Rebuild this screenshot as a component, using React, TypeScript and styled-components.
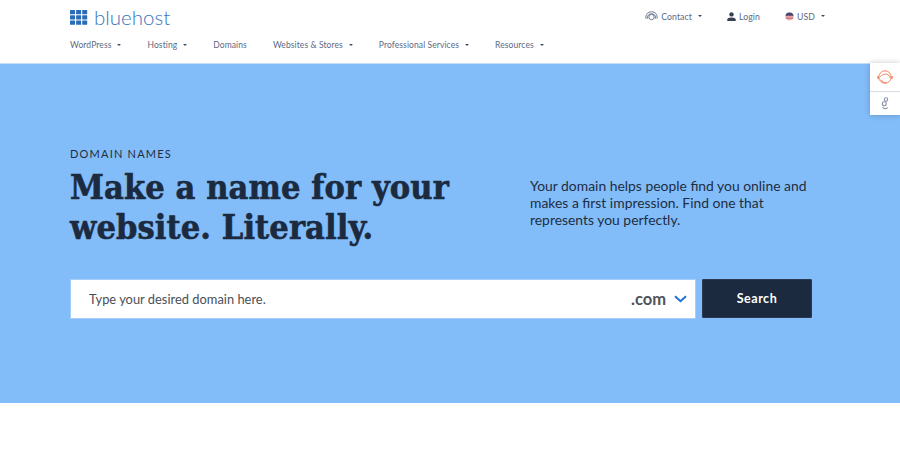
import React from "react";
import styled, { createGlobalStyle } from "styled-components";

const Global = createGlobalStyle`
  html, body { margin: 0; padding: 0; background: #fff; }
  body { font-family: "Lato", "Liberation Sans", sans-serif; overflow: hidden; }
`;

const Page = styled.div`
  width: 900px;
  height: 476px;
  position: relative;
  overflow: hidden;
  background: #fff;
`;

const Header = styled.header`
  height: 63px;
  box-sizing: border-box;
  padding: 0 75px 0 70px;
  display: flex;
  flex-direction: column;
`;

const TopRow = styled.div`
  height: 36px;
  display: flex;
  justify-content: space-between;
  align-items: flex-start;
`;

const Logo = styled.a`
  display: flex;
  align-items: center;
  gap: 6px;
  padding-top: 8px;
  color: #3a75bb;
  font-size: 20.5px;
  font-weight: 300;
  line-height: 20px;
`;

const LogoWord = styled.span`
  margin-top: -1px;
`;

const Utility = styled.div`
  display: flex;
  align-items: center;
  gap: 25px;
  height: 32px;
`;

const UtilityItem = styled.span`
  display: inline-flex;
  align-items: center;
  gap: 3px;
  color: #5c6a84;
  font-size: 8.7px;
  letter-spacing: 0.1px;
`;

const Caret = styled.i<{ $near?: boolean }>`
  display: inline-block;
  width: 0;
  height: 0;
  margin-left: ${(p) => (p.$near ? "3px" : "6px")};
  border-left: 2px solid transparent;
  border-right: 2px solid transparent;
  border-top: 2px solid #3d4a66;
`;

const Nav = styled.nav`
  display: flex;
  align-items: center;
  gap: 26px;
  height: 16px;
  padding-top: 1px;
`;

const NavItem = styled.a`
  display: inline-flex;
  align-items: center;
  color: #5c6a84;
  font-size: 8.5px;
  letter-spacing: 0.1px;
  white-space: nowrap;
`;

const Hero = styled.section`
  height: 340px;
  box-sizing: border-box;
  background: #82bdf9;
  border-top: 1px solid #c3def9;
  padding: 84px 88px 0 70px;
  display: flex;
  flex-direction: column;
`;

const HeroTop = styled.div`
  display: flex;
  justify-content: space-between;
  align-items: flex-start;
`;

const Eyebrow = styled.div`
  color: #1f2d42;
  font-size: 11px;
  line-height: 12px;
  letter-spacing: 1.2px;
`;

const Title = styled.h1`
  margin: 7px 0 0;
  color: #1c2a3f;
  font-family: "DejaVu Serif Condensed", "DejaVu Serif", "Liberation Serif", serif;
  font-stretch: condensed;
  font-weight: 700;
  font-size: 34px;
  line-height: 40px;
  letter-spacing: 0.1px;
  -webkit-text-stroke: 0.6px #1c2a3f;
`;

const Lead = styled.p`
  margin: 29px 0 0;
  width: 282px;
  color: #1f2d42;
  font-size: 13.9px;
  line-height: 17px;
`;

const SearchRow = styled.form`
  margin-top: 32px;
  display: flex;
  gap: 6px;
`;

const SearchBox = styled.div`
  width: 626px;
  height: 40px;
  box-sizing: border-box;
  background: #fff;
  border: 1px solid #a5cff9;
  display: flex;
  align-items: center;
  padding: 0 8px 0 18px;
`;

const Placeholder = styled.span`
  flex: 1;
  color: #4a4f57;
  font-size: 12.9px;
`;

const Tld = styled.span`
  color: #4f5359;
  font-size: 16.5px;
  font-weight: 700;
  margin-right: 8px;
`;

const SearchButton = styled.button`
  width: 110px;
  height: 39px;
  padding: 0 0 1px;
  background: #1c2a3f;
  border: 1px solid #2c3a50;
  border-radius: 1px;
  color: #fff;
  font-family: "Lato", sans-serif;
  font-weight: 700;
  font-size: 12.5px;
  letter-spacing: 0.5px;
`;

const SideDock = styled.aside`
  position: absolute;
  right: 0;
  top: 63px;
  width: 30px;
  height: 52px;
  background: #fff;
  box-shadow: 0 0 6px rgba(0, 0, 0, 0.22);
  display: flex;
  flex-direction: column;
`;

const DockCell = styled.div<{ $divided?: boolean }>`
  flex: ${(p) => (p.$divided ? "23" : "29")};
  display: flex;
  align-items: center;
  justify-content: center;
  border-top: ${(p) => (p.$divided ? "1px solid #d9dde3" : "none")};
`;

const dash = [0, 1, 2];

const LogoMark = () => (
  <svg width="18" height="16" viewBox="0 0 18 16" fill="#2b6cb8">
    {dash.map((r) =>
      dash.map((c) => (
        <rect key={`${r}${c}`} x={c * 6.1} y={r * 5.2} width="5" height="4.3" rx="0.5" />
      ))
    )}
  </svg>
);

const Headset = () => (
  <svg width="13" height="10" viewBox="0 0 13 10" fill="none" stroke="#5c6a84" strokeWidth="0.9">
    <path d="M.8 7.5C.6 3 3 .8 6.5 .8S12.400 3 12.200 7.500" />
    <path d="M2.300 7.800C2 4.500 3.800 2.800 6.500 2.800S11 4.500 10.700 7.800" />
    <circle cx="6.500" cy="6" r="2.700" />
  </svg>
);

const Person = () => (
  <svg width="9" height="9" viewBox="0 0 9 9" fill="#36404f">
    <circle cx="4.5" cy="2.4" r="2.2" />
    <path d="M0.3 9V7.6C0.3 6.2 2 5.5 4.5 5.5S8.7 6.2 8.7 7.6V9z" />
  </svg>
);

const Flag = () => (
  <svg width="9" height="9" viewBox="0 0 9 9">
    <defs>
      <clipPath id="flagclip">
        <circle cx="4.5" cy="4.5" r="4" />
      </clipPath>
    </defs>
    <g clipPath="url(#flagclip)">
      <rect width="9" height="9" fill="#e9b9bd" />
      <rect y="3" width="9" height="1.3" fill="#d56a75" />
      <rect y="5.6" width="9" height="1.3" fill="#d56a75" />
      <rect width="9" height="3.6" fill="#3f4a74" />
    </g>
  </svg>
);

const AgentIcon = () => (
  <svg width="16" height="16" viewBox="0 0 16 16" fill="none" stroke="#f0835c" strokeWidth="1">
    <circle cx="8" cy="8" r="6.200" />
    <path d="M2.600 8.500C4.500 5.500 9 4 11.500 6C12.600 7 13 8 13.300 9" />
    <path d="M4 10.500C5 12.800 7 14 9.500 13.800" />
    <path d="M1 7v3M15 7v3" strokeWidth="1.400" />
  </svg>
);

const BulbIcon = () => (
  <svg width="8" height="13" viewBox="0 0 8 13" fill="none" stroke="#8a95a6" strokeWidth="1.100">
    <circle cx="5" cy="2.500" r="1.700" />
    <circle cx="3.300" cy="6.800" r="2" />
    <path d="M1.500 10.300c1 1.700 4 1.700 5.500 0.400" />
  </svg>
);

const Chevron = () => (
  <svg width="13" height="8" viewBox="0 0 13 8" fill="none" stroke="#2070d8" strokeWidth="2">
    <path d="M1 1.200l5.500 5 5.500-5" />
  </svg>
);

export default function App() {
  return (
    <Page>
      <Global />
      <Header>
        <TopRow>
          <Logo>
            <LogoMark />
            <LogoWord>bluehost</LogoWord>
          </Logo>
          <Utility>
            <UtilityItem>
              <Headset />
              Contact
              <Caret $near />
            </UtilityItem>
            <UtilityItem>
              <Person />
              Login
            </UtilityItem>
            <UtilityItem>
              <Flag />
              USD
              <Caret $near />
            </UtilityItem>
          </Utility>
        </TopRow>
        <Nav>
          <NavItem>WordPress<Caret /></NavItem>
          <NavItem>Hosting<Caret /></NavItem>
          <NavItem>Domains</NavItem>
          <NavItem>Websites &amp; Stores<Caret /></NavItem>
          <NavItem>Professional Services<Caret /></NavItem>
          <NavItem>Resources<Caret /></NavItem>
        </Nav>
      </Header>
      <Hero>
        <HeroTop>
          <div>
            <Eyebrow>DOMAIN NAMES</Eyebrow>
            <Title>
              Make a name for your
              <br />
              website. Literally.
            </Title>
          </div>
          <Lead>
            Your domain helps people find you online and makes a first impression. Find one that
            represents you perfectly.
          </Lead>
        </HeroTop>
        <SearchRow>
          <SearchBox>
            <Placeholder>Type your desired domain here.</Placeholder>
            <Tld>.com</Tld>
            <Chevron />
          </SearchBox>
          <SearchButton type="button">Search</SearchButton>
        </SearchRow>
      </Hero>
      <SideDock>
        <DockCell><AgentIcon /></DockCell>
        <DockCell $divided><BulbIcon /></DockCell>
      </SideDock>
    </Page>
  );
}
